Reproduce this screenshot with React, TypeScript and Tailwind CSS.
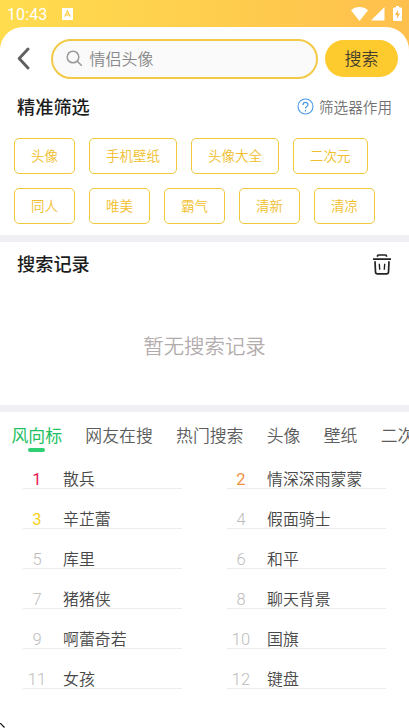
import React, { useState } from 'react'
import clsx from 'clsx'

interface HotWord {
  rank: number
  word: string
}

const FILTERS = [
  ['头像', '手机壁纸', '头像大全', '二次元'],
  ['同人', '唯美', '霸气', '清新', '清凉']
]

const TABS = ['风向标', '网友在搜', '热门搜索', '头像', '壁纸', '二次元']

const HOT_WORDS: HotWord[] = [
  '散兵',
  '情深深雨蒙蒙',
  '辛芷蕾',
  '假面骑士',
  '库里',
  '和平',
  '猪猪侠',
  '聊天背景',
  '啊蕾奇若',
  '国旗',
  '女孩',
  '键盘'
].map((word, idx) => ({ rank: idx + 1, word }))

function getRankColor(rank: number): string {
  switch (rank) {
    case 1:
      return 'text-[#ea1550]'
    case 2:
      return 'text-[#f0913f]'
    case 3:
      return 'text-[#f5d022]'
    default:
      return 'font-light text-[#bcbcbc]'
  }
}

function StatusBar() {
  return (
    <div className="flex h-[27px] items-center pl-[7px] pr-[7px] pt-[2px] text-white">
      <span className="font-[Roboto] text-[16px] leading-none tracking-[0.1px]">10:43</span>
      <svg className="ml-[15px] -mt-[1px]" width="11" height="12" viewBox="0 0 11 12">
        <rect width="11" height="12" rx="1" fill="#fff" />
        <path d="M2.8 8.6 5.5 3l2.7 5.6M3.8 6.9h3.4" fill="none" stroke="#fdcf50" strokeWidth="1.3" />
      </svg>
      <svg className="ml-auto -mt-[2px]" width="17" height="14" viewBox="0 0 17 14" fill="#fff">
        <path d="M0 3.2C2.4 1 5.300 0 8.500 0s6.100 1 8.500 3.200L8.500 14z" />
      </svg>
      <svg className="ml-[3px] -mt-[1px]" width="14" height="14" viewBox="0 0 14 14" fill="#fff">
        <path d="M13.500 0v13.500H0z" />
      </svg>
      <svg className="ml-[8px] -mt-[2px]" width="9" height="15" viewBox="0 0 9 15">
        <path d="M3 0h3v1.500h2q1 0 1 1V14q0 1-1 1H1q-1 0-1-1V2.500q0-1 1-1h2z" fill="#fff" />
        <path d="M5 4 2 9h2v3.500L7 7.500H5z" fill="#fdb84d" />
      </svg>
    </div>
  )
}

function SearchHeader() {
  return (
    <div className="flex h-[62px] items-center pl-[17px] pr-[11px]">
      <svg width="13" height="23" viewBox="0 0 13 23" fill="none">
        <path d="M11 2 2.200 11.500 11 21" stroke="#606060" strokeWidth="2.900" strokeLinecap="round" strokeLinejoin="round" />
      </svg>
      <div className="ml-[21px] mt-[2px] flex h-[40px] w-[267px] items-center rounded-full border-2 border-[#f3ca48] bg-[#fafafa] pl-[13px]">
        <svg className="-mt-[1px]" width="17" height="17" viewBox="0 0 17 17" fill="none" stroke="#999" strokeWidth="1.500">
          <circle cx="7" cy="7" r="5.800" />
          <path d="m11.300 11.300 4.500 4.500" />
        </svg>
        <span className="-mt-[2px] ml-[6.500px] text-[16px] font-[350] text-[#888]">情侣头像</span>
      </div>
      <button className="ml-[7px] h-[37px] w-[73px] rounded-full bg-[#fecb2f] pb-px text-[17px] font-[350] text-[#443e2c]">
        搜索
      </button>
    </div>
  )
}

function FilterSection() {
  return (
    <section className="h-[146px]">
      <div className="flex h-[36px] items-center justify-between pl-[17px] pr-[17px]">
        <h2 className="text-[18.200px] font-medium text-[#1c1c1c]">精准筛选</h2>
        <div className="flex items-center gap-[5px]">
          <svg width="17" height="17" viewBox="0 0 17 17" fill="none" stroke="#4b9bea" strokeWidth="1.100">
            <circle cx="8.500" cy="8.500" r="7.500" />
            <path d="M6 6.900c0-3.300 5-3.300 5-.3 0 1.900-2.500 1.800-2.500 3.900M8.500 12v1.400" strokeWidth="1.300" />
          </svg>
          <span className="text-[14.600px] font-[350] text-[#707070]">筛选器作用</span>
        </div>
      </div>
      <div className="mt-[13px] flex flex-col gap-[14px] pl-[14px]">
        {FILTERS.map((row, idx) => (
          <div key={idx} className="flex gap-[14px]">
            {row.map((tag) => (
              <button
                key={tag}
                className="h-[36px] rounded-[5px] border border-[#f0c83c] px-[16px] pb-[2px] text-[13.500px] font-[350] text-[#f0be2c]"
              >
                {tag}
              </button>
            ))}
          </div>
        ))}
      </div>
    </section>
  )
}

function HistorySection() {
  return (
    <section className="h-[163px]">
      <div className="flex h-[44px] items-center justify-between pl-[17px] pr-[18px]">
        <h2 className="text-[18.200px] font-medium text-[#1c1c1c]">搜索记录</h2>
        <svg width="18" height="21" viewBox="0 0 18 21" fill="none" stroke="#222" strokeWidth="1.700">
          <path d="M4.500 2.800V2Q4.500 1 5.500 1h7q1 0 1 1v.8M0 5.200h18" />
          <path d="M2 7.200 2.500 18q.1 1.900 2 1.900h9q1.900 0 2-1.900L16 7.200" />
          <path d="m6.300 9.800.4 6M11.700 9.800l-.4 6" strokeWidth="1.400" />
        </svg>
      </div>
      <p className="mt-[21px] text-center text-[20.400px] font-[350] leading-[76px] text-[#b3acac]">暂无搜索记录</p>
    </section>
  )
}

function HotSection() {
  const [active, setActive] = useState(TABS[0])

  return (
    <section>
      <div className="-mb-[10px] flex h-[47px] gap-[23.300px] overflow-hidden pl-[11.500px]">
        {TABS.map((tab) => (
          <button
            key={tab}
            onClick={() => setActive(tab)}
            className={clsx(
              'flex shrink-0 flex-col items-center pt-[5px] text-[16.850px] leading-[35px]',
              tab === active ? 'text-[#22c062]' : 'font-[350] text-[#5c5c5c]'
            )}
          >
            {tab}
            {tab === active && <span className="-mt-[4px] h-[4px] w-[17px] shrink-0 rounded-full bg-[#2fd072]" />}
          </button>
        ))}
      </div>
      <div className="grid grid-cols-[159px_159px] gap-x-[45px] pl-[23px]">
        {HOT_WORDS.map(({ rank, word }) => (
          <div key={rank} className="flex h-[40px] items-end border-b border-[#ececec]">
            <span className={clsx('w-[28px] text-center font-[Roboto] text-[16.500px] leading-[17px]', getRankColor(rank))}>
              {rank}
            </span>
            <span className="ml-[12px] text-[15.900px] font-[350] leading-[19px] text-[#484848]">{word}</span>
          </div>
        ))}
      </div>
    </section>
  )
}

export default function App() {
  return (
    <div className="relative h-[728px] w-[409px] overflow-hidden bg-linear-to-r from-[#ffdc4e] to-[#fec04d] font-['Noto_Sans_CJK_SC',sans-serif]">
      <StatusBar />
      <main className="h-[701px] rounded-t-[23px] bg-white">
        <SearchHeader />
        <FilterSection />
        <div className="h-[7px] bg-[#f0f0f4]" />
        <HistorySection />
        <div className="h-[7px] bg-[#f0f0f4]" />
        <HotSection />
      </main>
      {/* pointer tip in the corner */}
      <svg className="absolute bottom-0 left-0" width="5" height="5" viewBox="0 0 5 5">
        <path d="M0 0l4.500 4.500" stroke="#111" strokeWidth="1.200" />
      </svg>
    </div>
  )
}
